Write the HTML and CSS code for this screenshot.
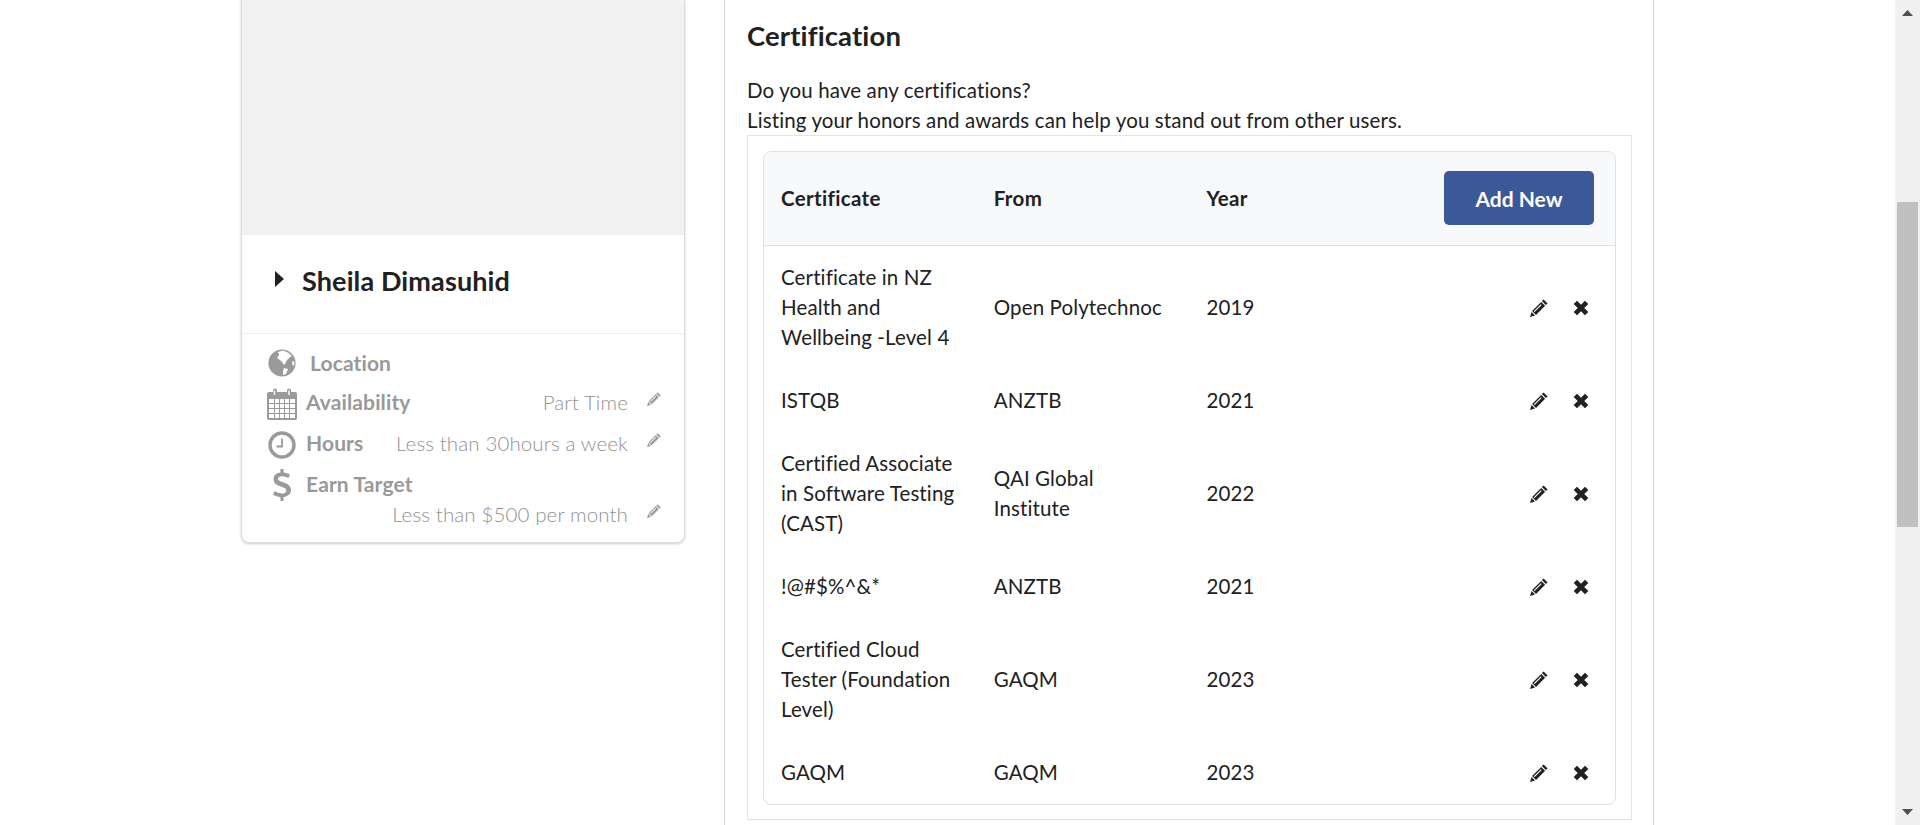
FILE: index.html
```html
<!DOCTYPE html>
<html lang="en">
  <head>
    <meta charset="UTF-8" />
    <title>Profile - Certification</title>
    <link rel="stylesheet" href="styles.css">
  </head>
  <body>
    <svg class="sprites" width="0" height="0">
      <symbol id="pencil" viewBox="0 0 18 18">
        <path d="M13.6 .4 17.6 4.4 15.9 6.1 11.9 2.1Z" />
        <path d="M11.2 2.9 15.1 6.8 6 15.9 2.1 12Z" />
        <path d="M1.6 13 5 16.4 0 18Z" />
        <path d="M10.8 5.2 11.6 6 4.6 13 3.8 12.2Z" fill="#fff" />
      </symbol>
      <symbol id="cross" viewBox="0 0 15 15">
        <path d="M2.2 2.2 12.8 12.8M12.8 2.2 2.2 12.8" fill="none" stroke="currentColor" stroke-width="4.4" />
      </symbol>
    </svg>

    <div class="page">
      <main class="content">
        <!-- Profile card on the left -->
        <aside class="card">
          <div class="photo"></div>
          <div class="name-row">
            <svg class="caret" viewBox="0 0 9 16"><path d="M0 0 9 8 0 16Z" /></svg>
            <h2 class="name">Sheila Dimasuhid</h2>
          </div>
          <ul class="stats">
            <li class="stat stat-location">
              <span class="stat-icon">
                <svg width="28" height="28" viewBox="0 0 28 28">
                  <circle cx="14" cy="14" r="13.6" fill="#9a9a9a" />
                  <path d="M10 3 15 1.5 20 3.5 24 7 22 8 19 11 17 15 16 16 14 13 12 11 9 9 11 6Z" fill="#fff" />
                  <path d="M16 19 20 20 18 25 15 26 15 22Z" fill="#fff" />
                  <path d="M24 12 26.5 13 26 17 24.5 16Z" fill="#fff" />
                </svg>
              </span>
              <span class="stat-label">Location</span>
            </li>
            <li class="stat">
              <span class="stat-icon">
                <svg width="30" height="32" viewBox="0 0 30 32">
                  <path d="M2 4H6V2.5A2 2 0 0 1 10 2.5V4H20V2.5A2 2 0 0 1 24 2.5V4H28A2 2 0 0 1 30 6V30A2 2 0 0 1 28 32H2A2 2 0 0 1 0 30V6A2 2 0 0 1 2 4Z" fill="#9a9a9a" />
                  <path d="M7.5 2.5V7M22 2.5V7" stroke="#fff" stroke-width="1.4" />
                  <path d="M2 11H28V30H2Z" fill="#fff" />
                  <path d="M7.5 11V30M12.5 11V30M17.5 11V30M22.5 11V30M2 15.5H28M2 20.5H28M2 25.5H28" stroke="#9a9a9a" stroke-width="1" />
                </svg>
              </span>
              <span class="stat-label">Availability</span>
              <span class="stat-value">Part Time <svg class="stat-edit"><use href="#pencil" /></svg></span>
            </li>
            <li class="stat">
              <span class="stat-icon">
                <svg width="28" height="28" viewBox="0 0 28 28">
                  <circle cx="14" cy="14" r="12" fill="none" stroke="#9a9a9a" stroke-width="3.4" />
                  <path d="M14 7.5V15.5H8.5" fill="none" stroke="#9a9a9a" stroke-width="1.8" />
                </svg>
              </span>
              <span class="stat-label">Hours</span>
              <span class="stat-value">Less than 30hours a week <svg class="stat-edit"><use href="#pencil" /></svg></span>
            </li>
            <li class="stat stat-earn">
              <span class="stat-icon">
                <svg width="18" height="32" viewBox="0 0 18 32">
                  <path d="M7.5 0H10.5V3.5C13 3.8 15.5 4.6 17 5.6L15.4 9C13.5 7.9 11 7.2 8.8 7.2 6.6 7.2 5 8.2 5 9.8 5 11.6 7 12.2 10 13.2 14.5 14.6 18 16.3 18 21 18 25 15 27.4 10.5 28V32H7.5V28.2C4.8 28 2 27 0 25.6L1.8 22C3.8 23.5 6.5 24.5 8.9 24.5 11.6 24.5 13.4 23.4 13.4 21.4 13.4 19.4 11.4 18.7 8.2 17.7 3.8 16.3 .6 14.6 .6 10.1 .6 6.4 3.3 4 7.5 3.5Z" fill="#9a9a9a" />
                </svg>
              </span>
              <span class="stat-label">Earn Target</span>
              <span class="stat-value">Less than $500 per month <svg class="stat-edit"><use href="#pencil" /></svg></span>
            </li>
          </ul>
        </aside>

        <!-- Certification section -->
        <section class="panel">
          <h2 class="panel-title">Certification</h2>
          <p class="panel-text">Do you have any certifications?<br />Listing your honors and awards can help you stand out from other users.</p>
          <div class="cert-box">
            <div class="cert-card">
              <table class="cert-table">
                <thead>
                  <tr>
                    <th>Certificate</th>
                    <th>From</th>
                    <th>Year</th>
                    <th class="cell-actions"><button class="btn-add" type="button">Add New</button></th>
                  </tr>
                </thead>
                <tbody>
                  <tr>
                    <td>Certificate in NZ Health and Wellbeing -Level 4</td>
                    <td>Open Polytechnoc</td>
                    <td>2019</td>
                    <td class="cell-actions"><svg class="icon-edit"><use href="#pencil" /></svg><svg class="icon-delete"><use href="#cross" /></svg></td>
                  </tr>
                  <tr>
                    <td>ISTQB</td>
                    <td>ANZTB</td>
                    <td>2021</td>
                    <td class="cell-actions"><svg class="icon-edit"><use href="#pencil" /></svg><svg class="icon-delete"><use href="#cross" /></svg></td>
                  </tr>
                  <tr>
                    <td>Certified Associate in Software Testing (CAST)</td>
                    <td>QAI Global Institute</td>
                    <td>2022</td>
                    <td class="cell-actions"><svg class="icon-edit"><use href="#pencil" /></svg><svg class="icon-delete"><use href="#cross" /></svg></td>
                  </tr>
                  <tr>
                    <td>!@#$%^&amp;*</td>
                    <td>ANZTB</td>
                    <td>2021</td>
                    <td class="cell-actions"><svg class="icon-edit"><use href="#pencil" /></svg><svg class="icon-delete"><use href="#cross" /></svg></td>
                  </tr>
                  <tr>
                    <td>Certified Cloud Tester (Foundation Level)</td>
                    <td>GAQM</td>
                    <td>2023</td>
                    <td class="cell-actions"><svg class="icon-edit"><use href="#pencil" /></svg><svg class="icon-delete"><use href="#cross" /></svg></td>
                  </tr>
                  <tr>
                    <td>GAQM</td>
                    <td>GAQM</td>
                    <td>2023</td>
                    <td class="cell-actions"><svg class="icon-edit"><use href="#pencil" /></svg><svg class="icon-delete"><use href="#cross" /></svg></td>
                  </tr>
                </tbody>
              </table>
            </div>
          </div>
        </section>
      </main>

      <!-- Browser scrollbar, the shot is taken part way down the page -->
      <div class="scrollbar">
        <svg class="scroll-arrow" viewBox="0 0 11 6"><path d="M5.5 0 11 6H0Z" /></svg>
        <div class="scroll-thumb"></div>
        <svg class="scroll-arrow scroll-arrow-down" viewBox="0 0 11 6"><path d="M0 0H11L5.5 6Z" /></svg>
      </div>
    </div>
  </body>
</html>
```

FILE: styles.css
```css
* {
  box-sizing: border-box;
}
body {
  margin: 0;
  height: 825px;
  overflow: hidden;
  background-color: #fff;
  font-family: Lato, "Liberation Sans", sans-serif;
  font-size: 20.5px;
  letter-spacing: 0.12px;
  line-height: 30px;
  color: #212121;
}
.sprites {
  display: block;
}
.page {
  display: flex;
  height: 825px;
}
.content {
  flex: 1;
  display: flex;
  align-items: flex-start;
  gap: 39px;
  padding-left: 241px;
  min-width: 0;
}

/* Profile card */
.card {
  width: 444px;
  height: 543px;
  background-color: #fff;
  border: 1px solid #ddd;
  border-top: none;
  border-radius: 0 0 8px 8px;
  box-shadow: 0 1px 3px rgba(0, 0, 0, 0.2);
}
.photo {
  height: 234px;
  background-color: #f1f1f1;
}
.name-row {
  display: flex;
  align-items: center;
  height: 100px;
  padding: 0 0 6px 33px;
  border-top: 1px solid #eee;
  border-bottom: 1px solid #eee;
}
.caret {
  width: 9px;
  height: 16px;
  margin-right: 18px;
  fill: #212121;
  margin-top: -5px;
}
.name {
  margin: 0;
  font-size: 27px;
  font-weight: 700;
  line-height: 32px;
}
.stats {
  list-style: none;
  margin: 0;
  padding: 8px 23px 0 25px;
  color: #999;
}
.stat {
  display: flex;
  flex-wrap: wrap;
  align-items: center;
}
.stat-icon {
  display: flex;
  justify-content: center;
  align-items: center;
  width: 30px;
  height: 41px;
  margin-right: 9px;
}
.stat-earn .stat-icon svg {
  margin-bottom: 2px;
}
.stat-location .stat-label {
  margin-left: 4px;
  margin-bottom: 0;
}
.stat-label {
  margin-bottom: 3px;
  font-size: 21px;
  font-weight: 700;
}
.stat-value {
  display: flex;
  align-items: center;
  margin-left: auto;
  margin-bottom: 4px;
  color: #929292;
  font-weight: 300;
  white-space: nowrap;
}
.stat-earn .stat-value {
  margin-top: -7px;
  margin-bottom: 0;
}
.stat-edit {
  width: 14px;
  height: 14px;
  margin: -6px 0 0 19px;
  fill: #999;
}

/* Certification panel */
.panel {
  width: 930px;
  height: 825px;
  padding: 0 21px 0 22px;
  border-left: 1px solid #d4d4d4;
  border-right: 1px solid #d4d4d4;
}
.panel-title {
  margin: 0;
  padding-top: 17px;
  font-size: 27.5px;
  font-weight: 700;
  line-height: 38px;
}
.panel-text {
  margin: 20px 0 0;
}
.cert-box {
  height: 685px;
  padding: 15px;
  border: 1px solid #e4e4e4;
}
.cert-card {
  border: 1px solid #e0e0e0;
  border-radius: 8px;
  overflow: hidden;
}
.cert-table {
  width: 100%;
  table-layout: fixed;
  border-collapse: collapse;
}
.cert-table th {
  height: 93px;
  padding: 0 17px;
  background-color: #f8f9fb;
  border-bottom: 1px solid #e0e0e0;
  text-align: left;
  font-weight: 700;
  letter-spacing: 0.35px;
}
.cert-table td {
  padding: 16.5px 17px;
  vertical-align: middle;
}
.cert-table .cell-actions {
  padding-right: 21px;
  text-align: right;
}
.cert-table td.cell-actions {
  padding-right: 26.5px;
}
.btn-add {
  width: 150px;
  height: 54px;
  padding: 0;
  background-color: #3b5998;
  color: #fff;
  border: none;
  border-radius: 5px;
  font-family: inherit;
  font-size: 21px;
  font-weight: 700;
  cursor: pointer;
}
.icon-edit {
  width: 18px;
  height: 18px;
  margin-bottom: 4px;
  fill: #212121;
  vertical-align: middle;
}
.icon-delete {
  width: 16px;
  height: 16px;
  margin-left: 25px;
  margin-bottom: 3px;
  color: #212121;
  vertical-align: middle;
}

/* Scrollbar */
.scrollbar {
  flex: none;
  display: flex;
  flex-direction: column;
  align-items: center;
  width: 25px;
  height: 825px;
  background-color: #f0f0f0;
}
.scroll-arrow {
  width: 11px;
  height: 6px;
  margin-top: 10px;
  fill: #505050;
}
.scroll-arrow-down {
  margin-top: auto;
  margin-bottom: 10px;
}
.scroll-thumb {
  width: 21px;
  height: 325px;
  margin-top: 186px;
  background-color: #c0c0c0;
}
```
